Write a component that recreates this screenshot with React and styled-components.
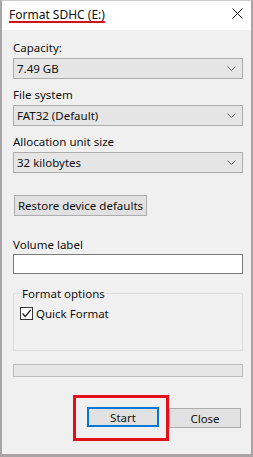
import styled, { createGlobalStyle } from "styled-components";

const GlobalStyle = createGlobalStyle`
  html, body {
    margin: 0;
    padding: 0;
    background: #ffffff;
  }
  * {
    box-sizing: border-box;
  }
`;

const Chevron = () => (
  <svg width="9" height="5" viewBox="0 0 9 5">
    <path d="M0.5 0.5 L4.5 4.5 L8.5 0.5" fill="none" stroke="#606060" strokeWidth="1" />
  </svg>
);

const Select = ({ value }) => (
  <SelectBox>
    <span>{value}</span>
    <Chevron />
  </SelectBox>
);

const App = () => {
  return (
    <>
      <GlobalStyle />
      <Window>
        <TitleBar>
          <Title>Format SDHC (E:)</Title>
          <CloseIcon width="11" height="11" viewBox="0 0 11 11">
            <path d="M0.5 0.5 L10.5 10.5 M10.5 0.5 L0.5 10.5" stroke="#111" strokeWidth="1" />
          </CloseIcon>
        </TitleBar>

        <Body>
          <Label>Capacity:</Label>
          <Select value="7.49 GB" />

          <Label $top={8}>File system</Label>
          <Select value="FAT32 (Default)" />

          <Label $top={8}>Allocation unit size</Label>
          <Select value="32 kilobytes" />

          <RestoreButton>Restore device defaults</RestoreButton>

          <Label $top={21} $bottom={2}>Volume label</Label>
          <TextInput />

          {/* Format options group */}
          <Group>
            <Legend>Format options</Legend>
            <CheckRow>
              <CheckBox>
                <svg width="11" height="11" viewBox="0 0 11 11">
                  <path d="M1.5 5.5 L4.2 8.5 L9.8 1.8" fill="none" stroke="#222" strokeWidth="1.3" />
                </svg>
              </CheckBox>
              Quick Format
            </CheckRow>
          </Group>

          <Progress />

          <Footer>
            <Highlight>
              <Button $primary>Start</Button>
            </Highlight>
            <Button>Close</Button>
          </Footer>
        </Body>
      </Window>
    </>
  );
};

const Window = styled.div`
  width: 253px;
  height: 457px;
  display: flex;
  flex-direction: column;
  background: #f0f0f0;
  border-top: 1px solid #cfcbcd;
  border-left: 2px solid #a8a4a6;
  border-right: 2px solid #a8a4a6;
  border-bottom: 3px solid #a8a4a6;
  font-family: "Noto Sans", "Liberation Sans", sans-serif;
  font-size: 11.5px;
  color: #111;
`;

const TitleBar = styled.div`
  height: 29px;
  flex-shrink: 0;
  display: flex;
  align-items: center;
  justify-content: space-between;
  padding: 0 8px 0 7px;
  background: #fff;
`;

const Title = styled.span`
  font-size: 12px;
  line-height: 15px;
  margin-top: -2px;
  text-decoration: underline;
  text-decoration-color: #d3121c;
  text-decoration-thickness: 2px;
  text-underline-offset: 2px;
`;

const CloseIcon = styled.svg`
  display: block;
  margin-top: -4px;
`;

const Body = styled.div`
  flex: 1;
  display: flex;
  flex-direction: column;
  padding: 10px 8px 0 11px;
`;

const Label = styled.div`
  line-height: 15px;
  margin-top: ${({ $top }) => $top || 0}px;
  margin-bottom: ${({ $bottom }) => ($bottom == null ? 3 : $bottom)}px;
`;

const SelectBox = styled.div`
  height: 21px;
  display: flex;
  align-items: center;
  justify-content: space-between;
  padding: 0 6px 0 3px;
  background: #e5e5e5;
  border: 1px solid #adadad;
  line-height: 15px;
`;

const RestoreButton = styled.div`
  align-self: flex-start;
  width: 133px;
  height: 21px;
  margin: 22px 0 0 1px;
  display: flex;
  align-items: center;
  justify-content: center;
  background: #e1e1e1;
  border: 1px solid #adadad;
  white-space: nowrap;
`;

const TextInput = styled.div`
  height: 20px;
  background: #fff;
  border: 1px solid #7a7a7a;
`;

const Group = styled.fieldset`
  margin: 12px 0 0 0;
  padding: 5px 6px 29px 6px;
  border: 1px solid #dcdcdc;
  min-width: 0;
`;

const Legend = styled.legend`
  padding: 0 1px;
  margin-left: 1px;
  line-height: 15px;
`;

const CheckRow = styled.div`
  display: flex;
  align-items: center;
  gap: 3px;
  line-height: 15px;
`;

const CheckBox = styled.span`
  width: 13px;
  height: 13px;
  display: flex;
  align-items: center;
  justify-content: center;
  background: #fff;
  border: 1px solid #333;
`;

const Progress = styled.div`
  height: 13px;
  margin-top: 13px;
  background: #e6e6e6;
  border: 1px solid #bcbcbc;
`;

const Footer = styled.div`
  display: flex;
  align-items: center;
  justify-content: flex-end;
  margin-top: 18px;
  padding-right: 2px;
`;

const Highlight = styled.div`
  padding: 9px 7px 11px 11px;
  border: 3px solid #e3101c;
`;

const Button = styled.div`
  width: 72px;
  height: 20px;
  display: flex;
  align-items: center;
  justify-content: center;
  background: #e1e1e1;
  border: ${({ $primary }) => ($primary ? "2px solid #0078d7" : "1px solid #adadad")};
`;

export default App;
